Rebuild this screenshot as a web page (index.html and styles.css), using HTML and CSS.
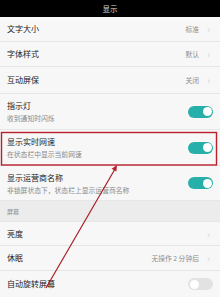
FILE: index.html
```html
<!DOCTYPE html>
<html>
<head>
<meta charset="utf-8">
<link rel="stylesheet" href="styles.css">
</head>
<body>
<div class="page">
  <div class="topbar">显示</div>
  <div class="row h25"><span class="title">文字大小</span><span class="right"><span class="value">标准</span><span class="chev">›</span></span></div>
  <div class="row h25"><span class="title">字体样式</span><span class="right"><span class="value">默认</span><span class="chev">›</span></span></div>
  <div class="row h27"><span class="title">互动屏保</span><span class="right"><span class="value">关闭</span><span class="chev">›</span></span></div>
  <div class="row h36"><div class="texts"><span class="title">指示灯</span><span class="sub">收到通知时闪烁</span></div><span class="toggle on"></span></div>
  <div class="row h36"><div class="texts"><span class="title">显示实时网速</span><span class="sub">在状态栏中显示当前网速</span></div><span class="toggle on"></span></div>
  <div class="row h35"><div class="texts"><span class="title">显示运营商名称</span><span class="sub">非锁屏状态下，状态栏上显示运营商名称</span></div><span class="toggle on"></span></div>
  <div class="section">屏幕</div>
  <div class="row h24"><span class="title">亮度</span><span class="right"><span class="chev">›</span></span></div>
  <div class="row h25"><span class="title">休眠</span><span class="right"><span class="value">无操作 2 分钟后</span><span class="chev">›</span></span></div>
  <div class="row h26 last"><span class="title">自动旋转屏幕</span><span class="toggle off"></span></div>
  <svg class="annot" width="220" height="297" viewBox="0 0 220 297">
    <rect x="1.5" y="132.5" width="215" height="32.5" fill="none" stroke="#b8202c" stroke-width="1.4"/>
    <line x1="46" y1="288" x2="115" y2="169" stroke="#a81c28" stroke-width="1.2"/>
    <polygon points="117,165 116.4,171.6 111.6,168.8" fill="#b8202c"/>
  </svg>
</div>
</body>
</html>
```
FILE: styles.css
```css
* { box-sizing: border-box; margin: 0; padding: 0; }
body { margin: 0; background: #f7f7f7; font-family: "Noto Sans CJK SC", "Noto Sans", sans-serif; }
.page { position: relative; width: 220px; height: 297px; overflow: hidden; background: #f7f7f7; display: flex; flex-direction: column; }
.topbar { height: 17px; flex: none; background: #000; color: #d8d8d8; font-size: 7.5px; display: flex; align-items: center; justify-content: center; }
.row { flex: none; display: flex; align-items: center; justify-content: space-between; padding: 0 7px; border-bottom: 1px solid #e6e6e6; background: #f7f7f7; }
.row.last { border-bottom: none; }
.h24 { height: 24px; } .h25 { height: 25px; } .h26 { height: 26px; } .h27 { height: 27px; } .h35 { height: 35px; } .h36 { height: 36px; }
.title { font-size: 8px; color: #222; line-height: 10px; }
.texts { display: flex; flex-direction: column; gap: 3px; }
.sub { font-size: 6.8px; color: #8a8a8a; line-height: 8px; white-space: nowrap; }
.right { display: flex; align-items: center; gap: 8px; }
.value { font-size: 6.8px; color: #8c8c8c; }
.chev { font-size: 10px; color: #d6d6d6; line-height: 10px; width: 6px; }
.toggle { width: 25px; height: 12px; border-radius: 6px; position: relative; flex: none; }
.toggle.on { background: #27b0aa; }
.toggle.off { background: #e2e2e2; }
.toggle::after { content: ""; position: absolute; top: 1.5px; width: 9px; height: 9px; border-radius: 50%; background: #fff; }
.toggle.on::after { right: 1.5px; }
.toggle.off::after { left: 1.5px; }
.section { flex: none; height: 21px; background: #ececec; color: #8a8a8a; font-size: 6px; display: flex; align-items: center; padding: 0 7px; border-bottom: 1px solid #e6e6e6; }
.annot { position: absolute; left: 0; top: 0; pointer-events: none; }
```
